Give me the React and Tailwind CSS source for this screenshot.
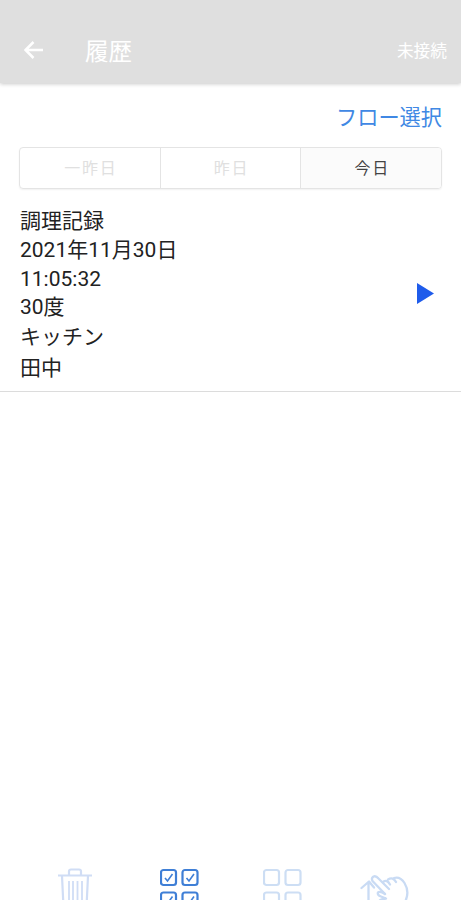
import React, { useState } from 'react';

const days = ['一昨日', '昨日', '今日'];

const record = [
  { text: '調理記録', row: 'h-[29px]' },
  { text: '2021年11月30日', row: 'h-[29px]' },
  { text: '11:05:32', row: 'h-[28px]' },
  { text: '30度', row: 'h-[29px]' },
  { text: 'キッチン', row: 'h-[31px]' },
  { text: '田中', row: 'h-[31px]' },
];

const TrashIcon = () => (
  <svg width="36" height="42" viewBox="0 0 36 42" fill="none" stroke="#d0ddf5" strokeWidth="2.2">
    <path d="M1 7.5h34" />
    <path d="M12 7V3.5Q12 1.5 14 1.5h8Q24 1.5 24 3.5V7" />
    <path d="M5 8l1.500 31h23L31 8" />
    <path d="M12 13v22M16 13v22M20.5 13v22M25 13v22" strokeWidth="1.8" />
  </svg>
);

const GridIcon = ({ checked }) => (
  <svg width="40" height="40" viewBox="0 0 40 40" fill="none" stroke={checked ? '#3f7fd6' : '#cddef4'} strokeWidth="2.2">
    {[[1, 2], [22.5, 2], [1, 24.5], [22.5, 24.5]].map(([x, y]) => (
      <g key={`${x}-${y}`}>
        <rect x={x} y={y} width="15" height="15" rx="2.5" />
        {checked && <path d={`M${x + 4} ${y + 8}l2.5 3 5-7`} strokeWidth="1.6" />}
      </g>
    ))}
  </svg>
);

const SwipeIcon = () => (
  <svg width="50" height="42" viewBox="0 0 50 42" fill="none" stroke="#c9dbf4" strokeWidth="2.3" strokeLinecap="round" strokeLinejoin="round">
    <path d="M1.500 13L9 6.500l5 6M8.500 7v20" />
    <path d="M25 19L12.500 6Q11 3 13.500 1.500q2.500-1 5 2L29 14" />
    <path d="M23 7q4-3 7 2.500M28 4.500q5-3 8 2.500M34 3q6-2 10.500 5 5.500 9 .5 19l-7 8" />
    <path d="M25 19q-5-3-7-1.500-1 2.500 3 4l5 2q-6 .5-7 3 5 0 9 3" />
  </svg>
);

const App = () => {
  const [day, setDay] = useState(2);

  return (
    <div className="flex h-screen w-full flex-col overflow-hidden bg-white font-[Roboto,'Noto_Sans_CJK_JP',sans-serif] text-[#222]">
      {/* Header */}
      <header className="flex h-[83px] shrink-0 items-center bg-[#dfdfdf] pt-[17px] pr-[14px] pl-6 text-white shadow-[0_1px_4px_rgba(0,0,0,0.22)]">
        <button aria-label="戻る">
          <svg width="19" height="18" viewBox="0 0 19 18" fill="none" stroke="currentColor" strokeWidth="2.5">
            <path d="M19 9H2M9.500 1L1.500 9l8 8" />
          </svg>
        </button>
        <h1 className="ml-[42px] pt-[5px] text-[23.5px] leading-none">履歴</h1>
        <span className="ml-auto pt-[5px] text-[16.7px] leading-none">未接続</span>
      </header>

      {/* Flow link */}
      <div className="flex h-[64px] shrink-0 items-center justify-end pt-[5px] pr-[19px]">
        <button className="text-[21.2px] leading-none text-[#4088e4]">フロー選択</button>
      </div>

      {/* Day tabs */}
      <div className="ml-[19px] flex h-[42px] w-[423px] shrink-0 overflow-hidden rounded border border-[#e4e4e4] shadow-[0_1px_2px_rgba(0,0,0,0.06)]">
        {days.map((label, i) => (
          <button
            key={label}
            onClick={() => setDay(i)}
            className={`flex-1 border-[#e4e4e4] pt-px pl-[2px] text-[16px] leading-none tracking-[1.8px] not-last:border-r ${
              day === i ? 'bg-[#fbfbfb] text-[#444]' : 'text-[#e0e0e0]'
            }`}
          >
            {label}
          </button>
        ))}
      </div>

      {/* Record */}
      <div className="flex h-[203px] shrink-0 items-start justify-between border-b border-[#dcdcdc] pt-[18px] pr-[27px] pl-5">
        <div className="text-[21px]">
          {record.map((item) => (
            <p key={item.text} className={`flex items-center leading-none ${item.row}`}>
              {item.text}
            </p>
          ))}
        </div>
        <button aria-label="再生" className="mt-[76px]">
          <svg width="17" height="21" viewBox="0 0 17 21" fill="#1f5ceb">
            <path d="M0 0l17 10.5L0 21z" />
          </svg>
        </button>
      </div>

      {/* Toolbar, its lower part runs past the screen */}
      <footer className="mt-auto flex h-[32px] shrink-0 items-start pl-[57px]">
        <button aria-label="削除"><TrashIcon /></button>
        <button aria-label="すべて選択" className="ml-[67px]"><GridIcon checked /></button>
        <button aria-label="選択解除" className="ml-[63px]"><GridIcon /></button>
        <button aria-label="スワイプ" className="mt-[7px] ml-[57px]"><SwipeIcon /></button>
      </footer>
    </div>
  );
};

export default App;
